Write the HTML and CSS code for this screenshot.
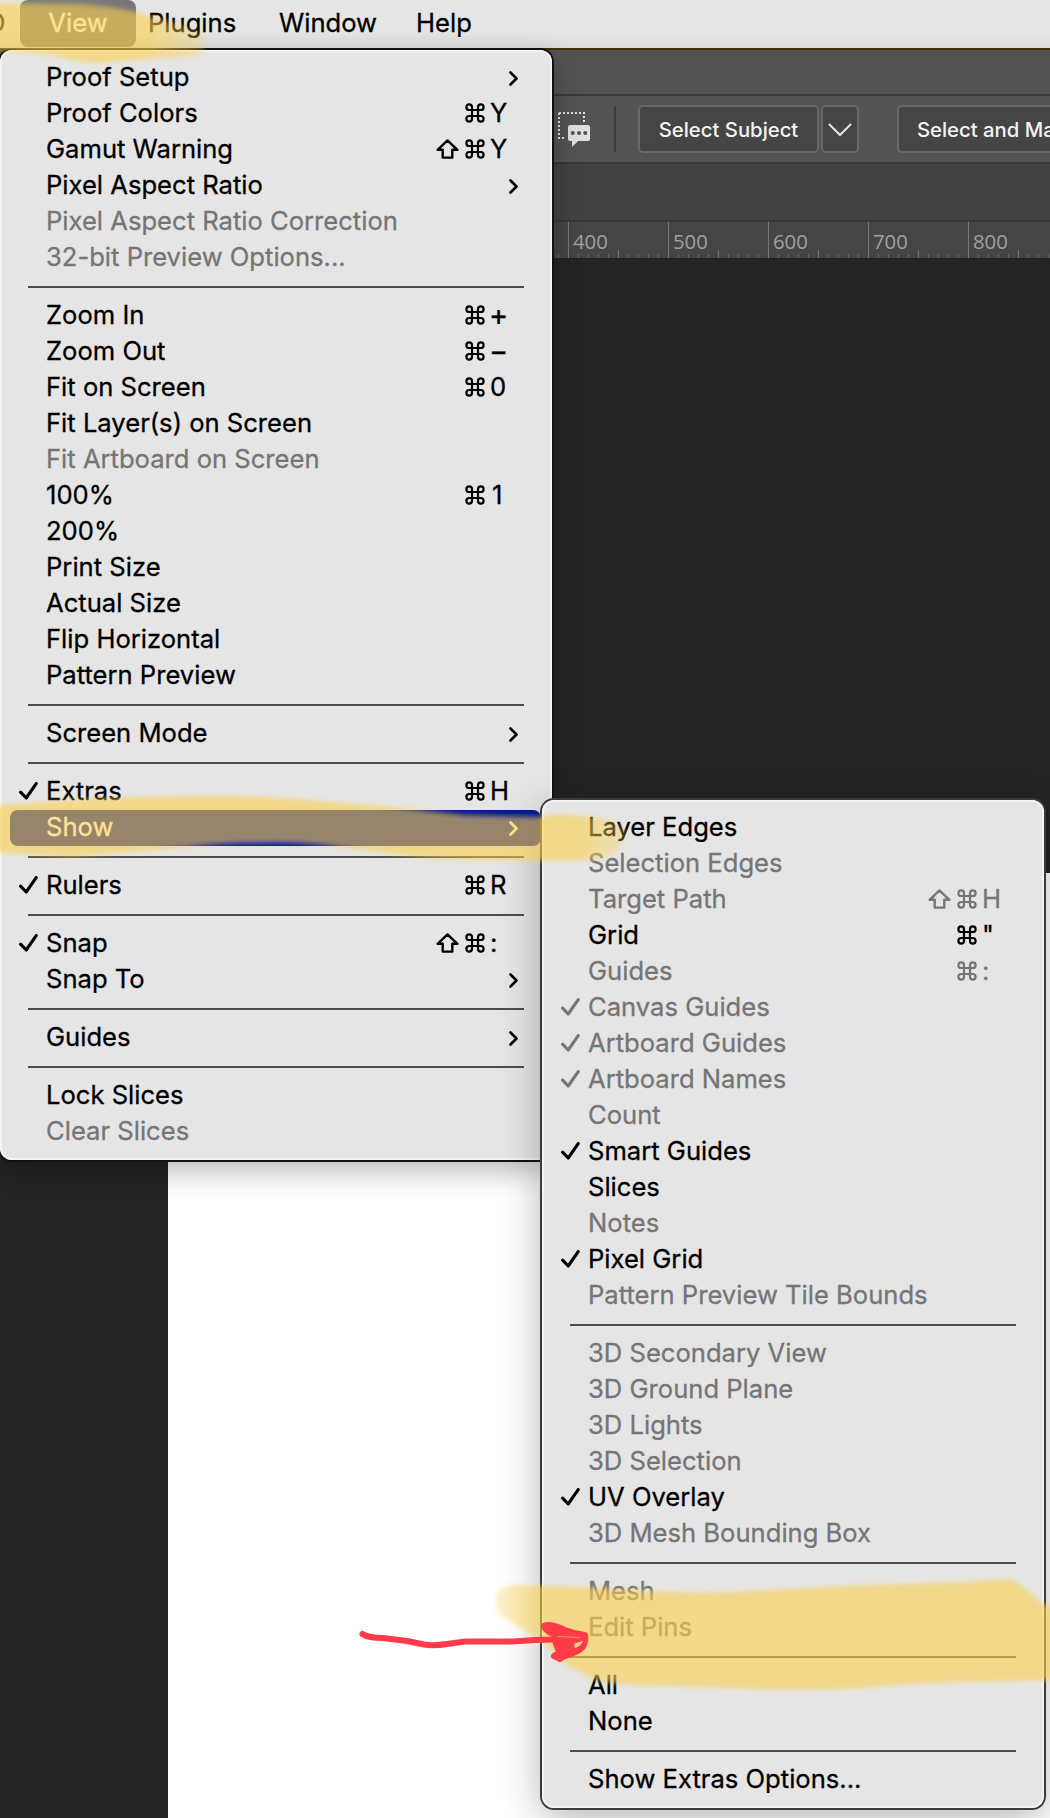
FILE: index.html
```html
<!DOCTYPE html>
<html lang="en">
<head>
    <meta charset="UTF-8">
    <meta name="viewport" content="width=device-width, initial-scale=1.0">
    <title>View Menu</title>
    <link rel="stylesheet" href="styles.css">
</head>
<body>
    <!-- Shared icons -->
    <svg class="icon-defs" width="0" height="0">
        <symbol id="cmd" viewBox="0 0 20 20">
            <path d="M7 7V4.2A2.8 2.8 0 1 0 4.2 7H15.8A2.8 2.8 0 1 0 13 4.2V15.8A2.8 2.8 0 1 0 15.8 13H4.2A2.8 2.8 0 1 0 7 15.8Z" fill="none" stroke="currentColor" stroke-width="2.2"/>
        </symbol>
        <symbol id="shift" viewBox="0 0 23 20">
            <path d="M11.5 1.4L21.4 10.8H16.3V18.6H6.7V10.8H1.6Z" fill="none" stroke="currentColor" stroke-width="2.4" stroke-linejoin="round"/>
        </symbol>
        <symbol id="check" viewBox="0 0 19 18">
            <path d="M1.6 10.2L7.2 16L17.2 1.6" fill="none" stroke="currentColor" stroke-width="3.1" stroke-linecap="round" stroke-linejoin="round"/>
        </symbol>
        <symbol id="arrow" viewBox="0 0 9 15">
            <path d="M1.5 1.5L7.5 7.5L1.5 13.5" fill="none" stroke="currentColor" stroke-width="2.6" stroke-linecap="round" stroke-linejoin="round"/>
        </symbol>
    </svg>

    <div class="screen">
        <!-- Top menu bar -->
        <div class="menubar">
            <span class="menubar-item cut">D</span>
            <span class="menubar-item active">View</span>
            <span class="menubar-item plugins">Plugins</span>
            <span class="menubar-item window">Window</span>
            <span class="menubar-item help">Help</span>
        </div>

        <!-- Application window -->
        <div class="title-strip"></div>
        <div class="options-bar">
            <svg class="feedback-icon" width="33" height="36" viewBox="0 0 33 36">
                <path d="M1 1H26V12M1 1V26H8" fill="none" stroke="#e0e0e0" stroke-width="2" stroke-dasharray="2 2"/>
                <path d="M12 13H30Q32 13 32 15V27Q32 29 30 29H20L14 35V29H12Q10 29 10 27V15Q10 13 12 13Z" fill="#e0e0e0"/>
                <circle cx="14.7" cy="21" r="2" fill="#505050"/>
                <circle cx="21" cy="21" r="2" fill="#505050"/>
                <circle cx="27.3" cy="21" r="2" fill="#505050"/>
            </svg>
            <span class="divider"></span>
            <button class="tool-button subject">Select Subject</button>
            <button class="tool-button drop">
                <svg width="24" height="14" viewBox="0 0 24 14"><path d="M1 1L12 12L23 1" fill="none" stroke="#e4e4e4" stroke-width="2"/></svg>
            </button>
            <button class="tool-button mask">Select and Mask...</button>
        </div>
        <div class="tab-strip"></div>
        <div class="ruler">
            <span>400</span>
            <span>500</span>
            <span>600</span>
            <span>700</span>
            <span>800</span>
        </div>
        <div class="workspace">
            <div class="document"></div>
        </div>

        <!-- View menu -->
        <div class="menu view-menu">
            <div class="item"><span class="tick"></span><span class="label">Proof Setup</span><svg class="sub"><use href="#arrow"/></svg></div>
            <div class="item"><span class="tick"></span><span class="label">Proof Colors</span><svg class="mod"><use href="#cmd"/></svg><span class="key">Y</span></div>
            <div class="item"><span class="tick"></span><span class="label">Gamut Warning</span><svg class="mod shift"><use href="#shift"/></svg><svg class="mod"><use href="#cmd"/></svg><span class="key">Y</span></div>
            <div class="item"><span class="tick"></span><span class="label">Pixel Aspect Ratio</span><svg class="sub"><use href="#arrow"/></svg></div>
            <div class="item disabled"><span class="tick"></span><span class="label">Pixel Aspect Ratio Correction</span></div>
            <div class="item disabled"><span class="tick"></span><span class="label">32-bit Preview Options...</span></div>
            <hr>
            <div class="item"><span class="tick"></span><span class="label">Zoom In</span><svg class="mod"><use href="#cmd"/></svg><span class="key sign">+</span></div>
            <div class="item"><span class="tick"></span><span class="label">Zoom Out</span><svg class="mod"><use href="#cmd"/></svg><span class="key sign">−</span></div>
            <div class="item"><span class="tick"></span><span class="label">Fit on Screen</span><svg class="mod"><use href="#cmd"/></svg><span class="key">0</span></div>
            <div class="item"><span class="tick"></span><span class="label">Fit Layer(s) on Screen</span></div>
            <div class="item disabled"><span class="tick"></span><span class="label">Fit Artboard on Screen</span></div>
            <div class="item"><span class="tick"></span><span class="label">100%</span><svg class="mod"><use href="#cmd"/></svg><span class="key one">1</span></div>
            <div class="item"><span class="tick"></span><span class="label">200%</span></div>
            <div class="item"><span class="tick"></span><span class="label">Print Size</span></div>
            <div class="item"><span class="tick"></span><span class="label">Actual Size</span></div>
            <div class="item"><span class="tick"></span><span class="label">Flip Horizontal</span></div>
            <div class="item"><span class="tick"></span><span class="label">Pattern Preview</span></div>
            <hr>
            <div class="item"><span class="tick"></span><span class="label">Screen Mode</span><svg class="sub"><use href="#arrow"/></svg></div>
            <hr>
            <div class="item"><span class="tick"><svg><use href="#check"/></svg></span><span class="label">Extras</span><svg class="mod"><use href="#cmd"/></svg><span class="key">H</span></div>
            <div class="item selected"><span class="tick"></span><span class="label">Show</span><svg class="sub"><use href="#arrow"/></svg></div>
            <hr>
            <div class="item"><span class="tick"><svg><use href="#check"/></svg></span><span class="label">Rulers</span><svg class="mod"><use href="#cmd"/></svg><span class="key">R</span></div>
            <hr>
            <div class="item"><span class="tick"><svg><use href="#check"/></svg></span><span class="label">Snap</span><svg class="mod shift"><use href="#shift"/></svg><svg class="mod"><use href="#cmd"/></svg><span class="key">:</span></div>
            <div class="item"><span class="tick"></span><span class="label">Snap To</span><svg class="sub"><use href="#arrow"/></svg></div>
            <hr>
            <div class="item"><span class="tick"></span><span class="label">Guides</span><svg class="sub"><use href="#arrow"/></svg></div>
            <hr>
            <div class="item"><span class="tick"></span><span class="label">Lock Slices</span></div>
            <div class="item disabled"><span class="tick"></span><span class="label">Clear Slices</span></div>
        </div>

        <!-- Show submenu -->
        <div class="menu show-menu">
            <div class="item"><span class="tick"></span><span class="label">Layer Edges</span></div>
            <div class="item disabled"><span class="tick"></span><span class="label">Selection Edges</span></div>
            <div class="item disabled"><span class="tick"></span><span class="label">Target Path</span><svg class="mod shift"><use href="#shift"/></svg><svg class="mod"><use href="#cmd"/></svg><span class="key">H</span></div>
            <div class="item"><span class="tick"></span><span class="label">Grid</span><svg class="mod"><use href="#cmd"/></svg><span class="key">"</span></div>
            <div class="item disabled"><span class="tick"></span><span class="label">Guides</span><svg class="mod"><use href="#cmd"/></svg><span class="key">:</span></div>
            <div class="item disabled"><span class="tick"><svg><use href="#check"/></svg></span><span class="label">Canvas Guides</span></div>
            <div class="item disabled"><span class="tick"><svg><use href="#check"/></svg></span><span class="label">Artboard Guides</span></div>
            <div class="item disabled"><span class="tick"><svg><use href="#check"/></svg></span><span class="label">Artboard Names</span></div>
            <div class="item disabled"><span class="tick"></span><span class="label">Count</span></div>
            <div class="item"><span class="tick"><svg><use href="#check"/></svg></span><span class="label">Smart Guides</span></div>
            <div class="item"><span class="tick"></span><span class="label">Slices</span></div>
            <div class="item disabled"><span class="tick"></span><span class="label">Notes</span></div>
            <div class="item"><span class="tick"><svg><use href="#check"/></svg></span><span class="label">Pixel Grid</span></div>
            <div class="item disabled"><span class="tick"></span><span class="label">Pattern Preview Tile Bounds</span></div>
            <hr>
            <div class="item disabled"><span class="tick"></span><span class="label">3D Secondary View</span></div>
            <div class="item disabled"><span class="tick"></span><span class="label">3D Ground Plane</span></div>
            <div class="item disabled"><span class="tick"></span><span class="label">3D Lights</span></div>
            <div class="item disabled"><span class="tick"></span><span class="label">3D Selection</span></div>
            <div class="item"><span class="tick"><svg><use href="#check"/></svg></span><span class="label">UV Overlay</span></div>
            <div class="item disabled"><span class="tick"></span><span class="label">3D Mesh Bounding Box</span></div>
            <hr>
            <div class="item disabled"><span class="tick"></span><span class="label">Mesh</span></div>
            <div class="item disabled"><span class="tick"></span><span class="label">Edit Pins</span></div>
            <hr>
            <div class="item"><span class="tick"></span><span class="label">All</span></div>
            <div class="item"><span class="tick"></span><span class="label">None</span></div>
            <hr>
            <div class="item"><span class="tick"></span><span class="label">Show Extras Options...</span></div>
        </div>

        <!-- Highlighter and pen marks -->
        <svg class="marks" width="1050" height="1818" viewBox="0 0 1050 1818">
            <defs>
                <filter id="soft" x="-5%" y="-30%" width="110%" height="160%"><feGaussianBlur stdDeviation="2.5"/></filter>
                <linearGradient id="fadeRight" gradientUnits="userSpaceOnUse" x1="150" y1="0" x2="206" y2="0">
                    <stop offset="0" stop-color="#fcd04d"/>
                    <stop offset="1" stop-color="#fcd04d" stop-opacity="0.4"/>
                </linearGradient>
                <linearGradient id="fadeEnd" gradientUnits="userSpaceOnUse" x1="580" y1="0" x2="630" y2="0">
                    <stop offset="0" stop-color="#fcd04d"/>
                    <stop offset="1" stop-color="#fcd04d" stop-opacity="0.4"/>
                </linearGradient>
                <linearGradient id="fadeLeft" gradientUnits="userSpaceOnUse" x1="490" y1="0" x2="540" y2="0">
                    <stop offset="0" stop-color="#fcd04d" stop-opacity="0.4"/>
                    <stop offset="1" stop-color="#fcd04d"/>
                </linearGradient>
            </defs>
            <g fill-opacity="0.6" filter="url(#soft)">
                <path fill="url(#fadeRight)" d="M-10 3L80 4Q115 7 134 12L167 21Q190 26 203 36L204 50Q200 59 180 58L157 58L97 63Q70 60 50 55L-10 49Z"/>
                <path fill="url(#fadeEnd)" d="M-10 806L71 800Q143 796 229 796Q280 797 321 801L411 809L464 815L540 817L557 814L597 817Q624 822 626 835Q622 852 603 858Q580 862 500 860Q450 860 411 856L339 847Q300 842 264 843Q225 843 200 846L71 857L21 854L-10 852Z"/>
                <path fill="url(#fadeLeft)" d="M495 1600Q496 1588 509 1585L543 1586L597 1588Q660 1593 730 1592L863 1585L963 1582L1007 1579Q1014 1579 1023 1587L1044 1604L1060 1612V1680L963 1682Q900 1684 863 1688Q797 1692 730 1688L630 1685Q608 1684 597 1680L570 1667L540 1640L500 1615Q495 1608 495 1600Z"/>
            </g>
            <g fill="none" stroke="#ff3b49" stroke-width="6" stroke-linecap="round" stroke-linejoin="round">
                <path d="M362.500 1634Q368 1638 383 1638L407 1641L424 1644.500Q434 1646 447 1644L465 1641.500L513 1641.500L535 1640L553 1639.500L585 1636"/>
                <path d="M544 1627Q543 1625 549 1625Q558 1626 565 1630Q575 1634 585 1635Q586 1639 584 1645Q582 1650 573 1653L563 1657L560 1659L554 1656L559 1652L555 1641L560 1637Q548 1633 544 1627Z" fill="#ff3b49"/>
            </g>
            <path d="M574 1644Q578 1642 583 1641Q581 1646 575 1648Z" fill="#f3d98a"/>
            <path d="M558 1636.500L580 1637.500" fill="none" stroke="#f3b06f" stroke-width="0.8"/>
        </svg>
    </div>
</body>
</html>
```
FILE: styles.css
```css
/* General styles for the body */
body {
    margin: 0;
    font-family: Inter, "Liberation Sans", sans-serif;
    background: #242424;
}

.icon-defs {
    position: absolute;
}

.screen {
    position: relative;
    width: 1050px;
    height: 1818px;
    overflow: hidden;
    display: flex;
    flex-direction: column;
}

/* Menu bar */
.menubar {
    display: flex;
    height: 48px;
    flex: none;
    background: linear-gradient(#e5e5e5 70%, #dedede);
    border-bottom: 2px solid #3d300a;
    font-size: 25.6px;
    line-height: 46px;
    color: #000;
    -webkit-text-stroke: 0.3px currentColor;
}

.menubar-item {
    white-space: nowrap;
}

.cut {
    width: 20px;
    text-indent: -13px;
}

.active {
    width: 116px;
    height: 47px;
    border-radius: 8px;
    background: #77777b;
    color: #fff;
    text-align: center;
}

.plugins {
    margin-left: 12px;
    width: 131px;
}

.window {
    width: 137px;
}

/* Application bars */
.title-strip {
    height: 44px;
    flex: none;
    background: #535353;
    border-bottom: 2px solid #3a3a3a;
}

.options-bar {
    display: flex;
    align-items: center;
    height: 66px;
    flex: none;
    padding-left: 558px;
    background: #535353;
    border-bottom: 2px solid #383838;
}

.feedback-icon {
    flex: none;
    margin-top: 2px;
}

.divider {
    flex: none;
    width: 2px;
    height: 46px;
    margin: 0 22px 0 23px;
    background: #3c3c3c;
}

.tool-button {
    flex: none;
    box-sizing: border-box;
    height: 48px;
    padding: 0;
    border: 2px solid #686868;
    border-radius: 5px;
    background: #454545;
    color: #f4f4f4;
    font-family: Inter, "Liberation Sans", sans-serif;
    font-size: 20.3px;
    font-weight: 500;
    white-space: nowrap;
}

.subject {
    width: 181px;
}

.drop {
    width: 38px;
    margin-left: 2px;
}

.mask {
    width: 226px;
    margin-left: 38px;
    padding-left: 18px;
    text-align: left;
}

.tab-strip {
    height: 56px;
    flex: none;
    background: #424242;
    border-bottom: 2px solid #383838;
}

/* Ruler: one label per 100 units, short ticks every 10, longer at 50 */
.ruler {
    display: flex;
    height: 36px;
    flex: none;
    padding-left: 568px;
    background-color: #454545;
    background-image:
        repeating-linear-gradient(90deg, #777 0 1px, transparent 1px 50px),
        repeating-linear-gradient(90deg, #666 0 1px, transparent 1px 10px);
    background-size: 100% 8px, 100% 4px;
    background-position: 18px 100%, 8px 100%;
    background-repeat: no-repeat;
}

.ruler span {
    flex: none;
    box-sizing: border-box;
    width: 100px;
    padding-left: 4px;
    border-left: 1px solid #777;
    font-family: "Open Sans", "Noto Sans", sans-serif;
    font-size: 20.3px;
    line-height: 38px;
    color: #a0a0a0;
}

.workspace {
    flex: 1;
    display: flex;
    background: #242424;
    padding: 615px 0 0 168px;
}

.document {
    flex: 1;
    background: #fff;
}

/* Menus */
.menu {
    position: absolute;
    box-sizing: border-box;
    padding: 10px 0;
    border-radius: 12px;
    background: #e5e5e5;
    box-shadow: inset 0 0 0 2px #f3f3f3, 0 0 0 2px #3b3b3b, 0 10px 40px rgba(0, 0, 0, 0.3);
    color: #000;
    font-size: 25.6px;
    -webkit-text-stroke: 0.3px currentColor;
}

.view-menu {
    left: 0;
    top: 50px;
    width: 552px;
    height: 1110px;
    box-shadow: inset 0 0 0 2px #f3f3f3, 0 0 0 2px #121212, 0 10px 30px rgba(0, 0, 0, 0.3);
}

.show-menu {
    left: 542px;
    top: 800px;
    width: 502px;
    height: 1008px;
}

.item {
    display: flex;
    align-items: center;
    height: 36px;
    margin: 0 11px 0 10px;
    border-radius: 8px;
    line-height: 36px;
    white-space: nowrap;
}

.disabled {
    color: #757575;
}

.selected {
    background: #00149b;
    color: #fff;
}

.tick {
    display: flex;
    flex: none;
    box-sizing: border-box;
    width: 36px;
    padding-left: 9px;
}

.tick svg {
    width: 19px;
    height: 18px;
    margin-bottom: 2px;
}

.label {
    flex: 1;
    padding-bottom: 3px;
}

.mod {
    width: 20px;
    height: 20px;
    margin-right: 5px;
    margin-bottom: 3px;
}

.shift {
    width: 23px;
    margin-right: 6px;
}

.key {
    width: 51px;
    padding-bottom: 3px;
}

.sign {
    font-size: 29px;
    text-indent: -1px;
}

.one {
    text-indent: 2px;
}

.sub {
    width: 9px;
    height: 15px;
    margin: 1px 23px 0 0;
}

.menu hr {
    height: 2px;
    margin: 10px 28px;
    border: none;
    background: #4d4d4d;
}

/* Hand drawn marks lie over everything */
.marks {
    position: absolute;
    left: 0;
    top: 0;
}
```
